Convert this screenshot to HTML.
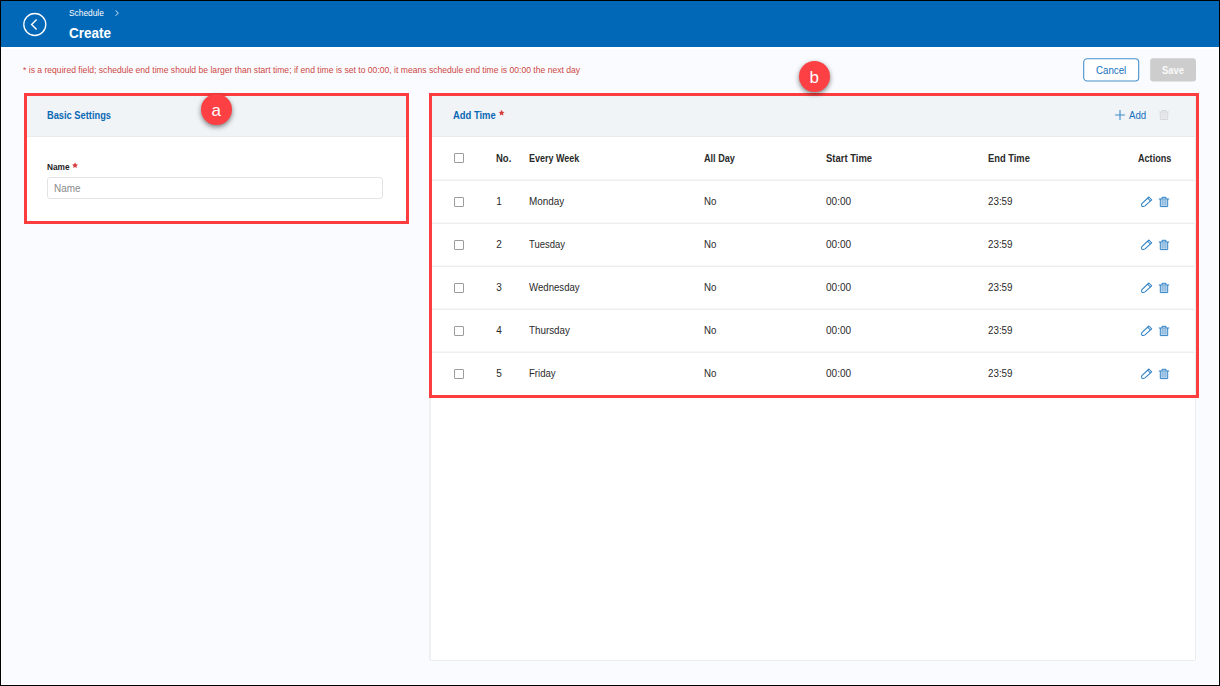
<!DOCTYPE html>
<html>
<head>
<meta charset="utf-8">
<title>Schedule - Create</title>
<style>
*{box-sizing:border-box;margin:0;padding:0}
html,body{width:1220px;height:686px;overflow:hidden;background:#fff}
body{font-family:"Liberation Sans",sans-serif;position:relative;color:#222}
.abs{position:absolute}
.t{position:absolute;white-space:nowrap;line-height:1;transform-origin:0 0}
#frame{left:0;top:0;width:1220px;height:686px;border:1px solid #000;z-index:50;pointer-events:none}
#bg{left:2px;top:49px;width:1216px;height:635px;background:#fafbfe}
#hdr{left:0;top:0;width:1220px;height:47px;background:#0068b7}
.panel{background:#fff;border:1px solid #ebecee;border-radius:2px}
.phead{background:#f1f4f7;border-bottom:1px solid #e8eaeb}
.red{border:3px solid #fc3d3f;z-index:10}
.badge{width:31px;height:31px;border-radius:50%;background:#fc4043;z-index:20;box-shadow:0 2px 5px rgba(0,0,0,.5);color:#fff;text-align:center}
.sep{left:431px;width:765px;height:2px;margin-top:-1px;background:linear-gradient(#f7f7f7 50%,#eeeeee 50%)}
.cb{width:10px;height:10px;border:1px solid #9c9c9c;border-radius:1px;background:#fff;left:454px}
.b{font-weight:bold}
.blue{color:#0b69b4}
.c{color:#2a2a2a}
</style>
</head>
<body>
<div id="bg" class="abs"></div>
<div id="hdr" class="abs"></div>

<!-- back icon -->
<svg class="abs" style="left:22px;top:12px" width="26" height="26" viewBox="0 0 26 26">
  <circle cx="12.8" cy="12.5" r="11" fill="none" stroke="#fff" stroke-width="1.3"/>
  <path d="M14.6 7.6 L9.6 12.6 L14.6 17.6" fill="none" stroke="#fff" stroke-width="1.4"/>
</svg>
<div class="t" id="t_sched" style="left:69.00px;transform:scaleX(0.9289);top:9px;font-size:9px;color:#fff">Schedule</div>
<svg class="abs" style="left:114px;top:9px" width="6" height="8" viewBox="0 0 6 8"><path d="M1.6 1.4 L4.3 4.1 L1.6 6.8" fill="none" stroke="#dbe9f5" stroke-width="1"/></svg>
<div class="t b" id="t_create" style="left:69.00px;transform:scaleX(0.9000);top:25.4px;font-size:15px;color:#fff">Create</div>

<!-- notice -->
<div class="t" id="t_notice" style="left:23.20px;transform:scaleX(0.9534);top:66px;font-size:9px;color:#cd4844">* is a required field; schedule end time should be larger than start time; if end time is set to 00:00, it means schedule end time is 00:00 the next day</div>

<!-- buttons -->
<svg class="abs" style="left:1080px;top:55px" width="120" height="30" viewBox="0 0 120 30"><rect x="3.7" y="3.8" width="55" height="22.2" rx="3.5" fill="#fff" stroke="#4690cc" stroke-width="1.1"/><rect x="70.2" y="3.3" width="45.8" height="23.2" rx="3" fill="#cdcdcd"/></svg>
<div class="t" id="t_cancel" style="left:1095.90px;transform:scaleX(0.9242);top:65px;font-size:10.5px;color:#1571bd">Cancel</div>

<div class="t b" id="t_save" style="left:1162.30px;transform:scaleX(0.9435);top:66px;font-size:10px;color:#fafafa">Save</div>

<!-- left panel -->
<div class="abs panel" style="left:25px;top:94px;width:383px;height:129px"></div>
<div class="abs phead" style="left:26px;top:95px;width:381px;height:42px"></div>
<div class="t b blue" id="t_basic" style="left:47.00px;transform:scaleX(0.8847);top:109.5px;font-size:10.5px">Basic Settings</div>
<div class="t b" id="t_name" style="left:47.00px;transform:scaleX(0.8731);top:162px;font-size:9.5px;color:#222">Name</div>
<svg class="abs star" style="left:70px;top:160px" width="10" height="10" viewBox="0 0 10 10"><polygon points="5.05,2.35 5.93,4.24 8.00,4.49 6.48,5.91 6.87,7.96 5.05,6.95 3.23,7.96 3.62,5.91 2.10,4.49 4.17,4.24" fill="#d63a3a"/></svg>
<div class="abs" style="left:47px;top:177px;width:336px;height:22px;border:1px solid #e2e4e6;border-radius:3px;background:#fff"></div>
<div class="t" id="t_ph" style="left:53.50px;transform:scaleX(0.9464);top:183px;font-size:10.5px;color:#8a8a8a">Name</div>

<!-- right panel -->
<div class="abs panel" style="left:429px;top:94px;width:767px;height:567px;border-left:2px solid #eff0f2"></div>
<div class="abs phead" style="left:431px;top:95px;width:764px;height:42px"></div>
<div class="t b blue" id="t_addtime" style="left:453.00px;transform:scaleX(0.8958);top:109.6px;font-size:10.5px">Add Time</div>
<svg class="abs star" style="left:496px;top:107px" width="10" height="10" viewBox="0 0 10 10"><polygon points="5.60,2.80 6.48,4.69 8.55,4.94 7.03,6.36 7.42,8.41 5.60,7.40 3.78,8.41 4.17,6.36 2.65,4.94 4.72,4.69" fill="#d63a3a"/></svg>

<!-- add / trash -->
<svg class="abs" style="left:1115px;top:110px" width="10" height="10" viewBox="0 0 10 10"><path d="M5 0.1 V9.9 M0.1 5 H9.9" stroke="#3d8bca" stroke-width="1.1" fill="none"/></svg>
<div class="t" id="t_add" style="left:1128.90px;transform:scaleX(0.9211);top:110px;font-size:10.5px;color:#1571bd">Add</div>
<svg class="abs" style="left:1158px;top:109px;opacity:.9" width="12" height="12" viewBox="0 0 12 12"><g fill="none" stroke="#d3d6d9" stroke-width="1"><path d="M1 3 H11 M4 3 V1.5 H8 V3 M2.3 3 V10.5 H9.7 V3"/><path d="M4.1 3.8 V9.8 M6 3.8 V9.8 M7.9 3.8 V9.8" stroke-width="1.2" opacity=".8"/></g></svg>

<!-- table header -->
<div class="abs cb" style="top:153px"></div>
<div class="t b c" id="h_no" style="left:496.40px;transform:scaleX(0.9500);top:154px;font-size:10px">No.</div>
<div class="t b c" id="h_week" style="left:528.80px;transform:scaleX(0.8982);top:154px;font-size:10px">Every Week</div>
<div class="t b c" id="h_all" style="left:704.00px;transform:scaleX(0.9118);top:154px;font-size:10px">All Day</div>
<div class="t b c" id="h_start" style="left:825.70px;transform:scaleX(0.9449);top:154px;font-size:10px">Start Time</div>
<div class="t b c" id="h_end" style="left:988.00px;transform:scaleX(0.9333);top:154px;font-size:10px">End Time</div>
<div class="t b c" id="h_act" style="left:1138.30px;transform:scaleX(0.9081);top:154px;font-size:10px">Actions</div>
<div class="abs sep" style="top:180px"></div>

<!-- rows inserted below -->
<!--ROWS_BEGIN-->
<div class="abs cb" style="top:197px"></div>
<div class="t c" id="r0_no" style="left:496.3px;top:197px;font-size:10px">1</div>
<div class="t c" id="r0_day" style="left:529.00px;transform:scaleX(0.9917);top:197px;font-size:10px">Monday</div>
<div class="t c" id="r0_all" style="left:704.00px;transform:scaleX(0.9692);top:197px;font-size:10px">No</div>
<div class="t c" id="r0_st" style="left:825.70px;transform:scaleX(1.0040);top:197px;font-size:10px">00:00</div>
<div class="t c" id="r0_en" style="left:988.00px;transform:scaleX(0.9800);top:197px;font-size:10px">23:59</div>
<svg class="abs" style="left:1140px;top:196px" width="13" height="12" viewBox="0 0 13 12"><g fill="none" stroke="#2f80c4" stroke-width="1.05" stroke-linejoin="round"><path d="M8.9 1.0 L11.7 3.8 L5.0 9.9 Q3.5 10.8 2.0 10.2 Q1.0 9.0 1.9 7.6 Z"/><path d="M7.6 2.2 L10.4 5.0"/></g></svg>
<svg class="abs" style="left:1158px;top:196px" width="12" height="12" viewBox="0 0 12 12"><g fill="none" stroke="#2f80c4" stroke-width="1"><path d="M0.8 3 H11.2 M4 3 V1.3 H8 V3 M2.3 3 V10.6 H9.7 V3"/><path d="M4.1 3.8 V9.8 M6 3.8 V9.8 M7.9 3.8 V9.8" stroke-width="1.2" opacity=".75"/></g></svg>
<div class="abs sep" style="top:223px"></div>
<div class="abs cb" style="top:240px"></div>
<div class="t c" id="r1_no" style="left:496.3px;top:240px;font-size:10px">2</div>
<div class="t c" id="r1_day" style="left:529.00px;transform:scaleX(0.9487);top:240px;font-size:10px">Tuesday</div>
<div class="t c" id="r1_all" style="left:704.00px;transform:scaleX(0.9692);top:240px;font-size:10px">No</div>
<div class="t c" id="r1_st" style="left:825.70px;transform:scaleX(1.0040);top:240px;font-size:10px">00:00</div>
<div class="t c" id="r1_en" style="left:988.00px;transform:scaleX(0.9800);top:240px;font-size:10px">23:59</div>
<svg class="abs" style="left:1140px;top:239px" width="13" height="12" viewBox="0 0 13 12"><g fill="none" stroke="#2f80c4" stroke-width="1.05" stroke-linejoin="round"><path d="M8.9 1.0 L11.7 3.8 L5.0 9.9 Q3.5 10.8 2.0 10.2 Q1.0 9.0 1.9 7.6 Z"/><path d="M7.6 2.2 L10.4 5.0"/></g></svg>
<svg class="abs" style="left:1158px;top:239px" width="12" height="12" viewBox="0 0 12 12"><g fill="none" stroke="#2f80c4" stroke-width="1"><path d="M0.8 3 H11.2 M4 3 V1.3 H8 V3 M2.3 3 V10.6 H9.7 V3"/><path d="M4.1 3.8 V9.8 M6 3.8 V9.8 M7.9 3.8 V9.8" stroke-width="1.2" opacity=".75"/></g></svg>
<div class="abs sep" style="top:266px"></div>
<div class="abs cb" style="top:283px"></div>
<div class="t c" id="r2_no" style="left:496.3px;top:283px;font-size:10px">3</div>
<div class="t c" id="r2_day" style="left:529.26px;transform:scaleX(0.9630);top:283px;font-size:10px">Wednesday</div>
<div class="t c" id="r2_all" style="left:704.00px;transform:scaleX(0.9692);top:283px;font-size:10px">No</div>
<div class="t c" id="r2_st" style="left:825.70px;transform:scaleX(1.0040);top:283px;font-size:10px">00:00</div>
<div class="t c" id="r2_en" style="left:988.00px;transform:scaleX(0.9800);top:283px;font-size:10px">23:59</div>
<svg class="abs" style="left:1140px;top:282px" width="13" height="12" viewBox="0 0 13 12"><g fill="none" stroke="#2f80c4" stroke-width="1.05" stroke-linejoin="round"><path d="M8.9 1.0 L11.7 3.8 L5.0 9.9 Q3.5 10.8 2.0 10.2 Q1.0 9.0 1.9 7.6 Z"/><path d="M7.6 2.2 L10.4 5.0"/></g></svg>
<svg class="abs" style="left:1158px;top:282px" width="12" height="12" viewBox="0 0 12 12"><g fill="none" stroke="#2f80c4" stroke-width="1"><path d="M0.8 3 H11.2 M4 3 V1.3 H8 V3 M2.3 3 V10.6 H9.7 V3"/><path d="M4.1 3.8 V9.8 M6 3.8 V9.8 M7.9 3.8 V9.8" stroke-width="1.2" opacity=".75"/></g></svg>
<div class="abs sep" style="top:309px"></div>
<div class="abs cb" style="top:326px"></div>
<div class="t c" id="r3_no" style="left:496.3px;top:326px;font-size:10px">4</div>
<div class="t c" id="r3_day" style="left:529.20px;transform:scaleX(0.9810);top:326px;font-size:10px">Thursday</div>
<div class="t c" id="r3_all" style="left:704.00px;transform:scaleX(0.9692);top:326px;font-size:10px">No</div>
<div class="t c" id="r3_st" style="left:825.70px;transform:scaleX(1.0040);top:326px;font-size:10px">00:00</div>
<div class="t c" id="r3_en" style="left:988.00px;transform:scaleX(0.9800);top:326px;font-size:10px">23:59</div>
<svg class="abs" style="left:1140px;top:325px" width="13" height="12" viewBox="0 0 13 12"><g fill="none" stroke="#2f80c4" stroke-width="1.05" stroke-linejoin="round"><path d="M8.9 1.0 L11.7 3.8 L5.0 9.9 Q3.5 10.8 2.0 10.2 Q1.0 9.0 1.9 7.6 Z"/><path d="M7.6 2.2 L10.4 5.0"/></g></svg>
<svg class="abs" style="left:1158px;top:325px" width="12" height="12" viewBox="0 0 12 12"><g fill="none" stroke="#2f80c4" stroke-width="1"><path d="M0.8 3 H11.2 M4 3 V1.3 H8 V3 M2.3 3 V10.6 H9.7 V3"/><path d="M4.1 3.8 V9.8 M6 3.8 V9.8 M7.9 3.8 V9.8" stroke-width="1.2" opacity=".75"/></g></svg>
<div class="abs sep" style="top:352px"></div>
<div class="abs cb" style="top:369px"></div>
<div class="t c" id="r4_no" style="left:496.3px;top:369px;font-size:10px">5</div>
<div class="t c" id="r4_day" style="left:529.20px;transform:scaleX(0.9571);top:369px;font-size:10px">Friday</div>
<div class="t c" id="r4_all" style="left:704.00px;transform:scaleX(0.9692);top:369px;font-size:10px">No</div>
<div class="t c" id="r4_st" style="left:825.70px;transform:scaleX(1.0040);top:369px;font-size:10px">00:00</div>
<div class="t c" id="r4_en" style="left:988.00px;transform:scaleX(0.9800);top:369px;font-size:10px">23:59</div>
<svg class="abs" style="left:1140px;top:368px" width="13" height="12" viewBox="0 0 13 12"><g fill="none" stroke="#2f80c4" stroke-width="1.05" stroke-linejoin="round"><path d="M8.9 1.0 L11.7 3.8 L5.0 9.9 Q3.5 10.8 2.0 10.2 Q1.0 9.0 1.9 7.6 Z"/><path d="M7.6 2.2 L10.4 5.0"/></g></svg>
<svg class="abs" style="left:1158px;top:368px" width="12" height="12" viewBox="0 0 12 12"><g fill="none" stroke="#2f80c4" stroke-width="1"><path d="M0.8 3 H11.2 M4 3 V1.3 H8 V3 M2.3 3 V10.6 H9.7 V3"/><path d="M4.1 3.8 V9.8 M6 3.8 V9.8 M7.9 3.8 V9.8" stroke-width="1.2" opacity=".75"/></g></svg>
<!--ROWS_END-->

<!-- red annotation boxes -->
<div class="abs red" style="left:24px;top:93px;width:385px;height:131px"></div>
<div class="abs red" style="left:429px;top:93px;width:770px;height:305px"></div>
<div class="abs badge" style="left:201px;top:94px"><span class="t" id="t_a" style="left:10.6px;top:8px;font-size:17px;color:#fff">a</span></div>
<div class="abs badge" style="left:799px;top:61px"><span class="t" id="t_b" style="left:10.6px;top:8px;font-size:17px;color:#fff">b</span></div>

<div id="frame" class="abs"></div>
</body>
</html>
